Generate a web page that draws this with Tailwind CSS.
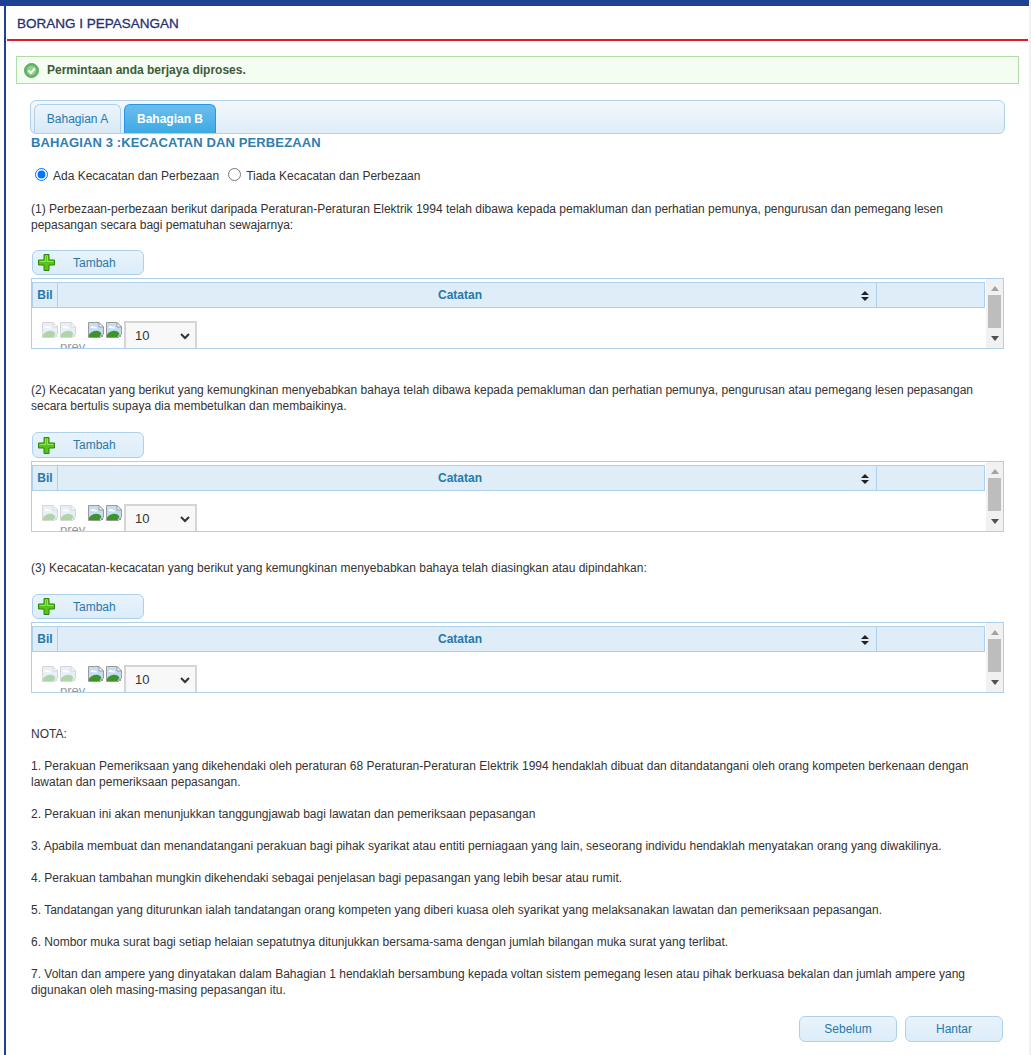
<!DOCTYPE html>
<html lang="en">
<head>
  <meta charset="UTF-8" />
  <title>Borang I Pepasangan</title>
  <script src="https://cdn.jsdelivr.net/npm/@tailwindcss/browser@4"></script>
</head>
<body class="bg-white h-[1055px] overflow-hidden border-r-2 border-[#f1f1f1] font-['Liberation_Sans',Arial,sans-serif] text-[12px] leading-[16px] text-[#333]">

  <svg width="0" height="0" class="absolute">
    <defs>
      <symbol id="broken" viewBox="0 0 16 16">
        <path d="M.5 .5h10.5l4.5 4.5v7l-3 3.500H.5z" fill="#c5dcf5" stroke="#9a9a9a" />
        <path d="M11 .5v4.500h4.500z" fill="#fff" stroke="#9a9a9a" />
        <path d="M2.500 6c0-2 3-2.500 4-1.200 1.500-.5 3 .5 2.500 1.700z" fill="#fff" />
        <path d="M1 15V12.500C4 9 8 8 11.500 9.500L13.500 11.500 11.500 15z" fill="#3f9427" />
        <path d="M13 13l2 2M15 13l-2 2" stroke="#9a9a9a" />
      </symbol>
      <symbol id="plus" viewBox="0 0 17 17">
        <path d="M6 .5h5v5.500h5.500v5H11v5.500H6V11H.5V6H6z" fill="#58c31a" stroke="#2c8508" />
        <path d="M7 1.500h3v5.500h5.500v1H9V2H8v6H1.500V7H7z" fill="#9be25c" />
      </symbol>
    </defs>
  </svg>

  <div class="h-[6px] bg-[#1f4192]"></div>

  <div class="ml-[4px] h-[1049px] border-l-2 border-[#1f4192] pl-px pr-px">
    <!-- Title -->
    <div class="h-[35px] border-b-2 border-[#e2192c] pl-[10px] pt-[9px]">
      <h1 class="text-[13.5px] leading-[18px] font-normal text-[#27306f] [-webkit-text-stroke:0.3px_#27306f]">BORANG I PEPASANGAN</h1>
    </div>

    <!-- Success message -->
    <div class="ml-[9px] mt-[15px] w-[1003px] h-[28px] border border-[#b0dfa5] bg-[#f4fdf1] flex items-center pl-[7px] gap-[8px]">
      <svg width="15" height="15" viewBox="0 0 15 15">
        <circle cx="7.5" cy="7.5" r="7" fill="#5cb85c" stroke="#6f9f6f" />
        <circle cx="7.5" cy="7.5" r="4.8" fill="#8fd18f" />
        <path d="M4.5 7.5 L6.8 10 L10.8 5.500" fill="none" stroke="#fff" stroke-width="2" />
      </svg>
      <span class="font-bold text-[#3f5a3a]">Permintaan anda berjaya diproses.</span>
    </div>

    <div class="pl-[24px] pr-[24px] mt-[16px]">
      <!-- Tabs -->
      <div class="-ml-px w-[975px] h-[34px] border border-[#aed0ea] rounded-[6px] bg-linear-to-b from-[#f3f8fc] to-[#deedf7] flex items-end pl-[3px] gap-[3px]">
        <button class="w-[87px] h-[29px] border border-b-0 border-[#aed0ea] rounded-t-[6px] bg-linear-to-b from-[#ecf4fb] to-[#d9e9f6] text-[#2779aa]">Bahagian A</button>
        <button class="w-[92px] h-[29px] border border-b-0 border-[#2694e8] rounded-t-[6px] bg-linear-to-b from-[#6bbdee] to-[#3baae3] text-white font-bold">Bahagian B</button>
      </div>

      <h2 class="h-[17px] text-[13px] tracking-[0.12px] leading-[17px] font-bold text-[#2e7eb0]">BAHAGIAN 3 :KECACATAN DAN PERBEZAAN</h2>

      <!-- Radios -->
      <div class="flex items-center mt-[14px] h-[18px] pl-[4px]">
        <input type="radio" name="kecacatan" checked class="w-[13px] h-[13px] accent-[#0075ff]" />
        <label class="ml-[5px] mt-[4px]">Ada Kecacatan dan Perbezaan</label>
        <input type="radio" name="kecacatan" class="w-[13px] h-[13px] ml-[9px]" />
        <label class="ml-[5px] mt-[4px]">Tiada Kecacatan dan Perbezaan</label>
      </div>

      <p class="mt-[18px] w-[960px]">(1) Perbezaan-perbezaan berikut daripada Peraturan-Peraturan Elektrik 1994 telah dibawa kepada pemakluman dan perhatian pemunya, pengurusan dan pemegang lesen pepasangan secara bagi pematuhan sewajarnya:</p>

      <!-- Table 1 -->
      <button class="mt-[17px] ml-px w-[112px] h-[25px] border border-[#aed0ea] rounded-[6px] bg-linear-to-b from-[#e8f3fc] to-[#dcedfa] flex items-center text-[#2779aa] pl-[5px]">
        <svg width="17" height="17"><use href="#plus" /></svg>
        <span class="ml-[18px]">Tambah</span>
      </button>
      <div class="mt-[3px] w-[973px] h-[71px] border border-[#aed0ea] flex overflow-hidden">
        <div class="w-[953px] pt-[3px]">
          <div class="h-[26px] flex border border-[#aed0ea] bg-[#deedf7] font-bold text-[#2779aa]">
            <div class="w-[25px] border-r border-[#aed0ea] flex items-center justify-center">Bil</div>
            <div class="w-[819px] border-r border-[#aed0ea] flex items-center justify-center pr-[14px] relative">Catatan
              <svg class="absolute right-[7px] top-[8px]" width="8" height="10" viewBox="0 0 8 10"><path d="M4 0L8 4H0zM4 10L0 6H8z" fill="#222" /></svg>
            </div>
          </div>
          <div class="flex pl-[10px] pt-[14px] h-[41px] relative">
            <svg class="opacity-40" width="16" height="16"><use href="#broken" /></svg>
            <svg class="opacity-40 ml-[2px]" width="16" height="16"><use href="#broken" /></svg>
            <span class="absolute left-[28px] top-[31px] text-[13px] text-[#999]">prev</span>
            <svg class="ml-[12px]" width="16" height="16"><use href="#broken" /></svg>
            <svg class="ml-[2px]" width="16" height="16"><use href="#broken" /></svg>
            <div class="ml-[2px] -mt-[1px] w-[73px] h-[29px] border-2 border-[#d5d5d5] bg-[#f8f8f8] flex items-center justify-between pl-[9px] pr-[2px] text-[13px]">
              <span>10</span>
              <svg width="16" height="16" viewBox="0 0 16 16"><path d="M4 6l4 4 4-4" fill="none" stroke="#333" stroke-width="2" /></svg>
            </div>
          </div>
        </div>
        <div class="w-[17px] ml-px bg-[#f1f1f1] flex flex-col items-center">
          <svg class="mt-[7px]" width="8" height="5" viewBox="0 0 8 5"><path d="M4 0l4 5H0z" fill="#a3a3a3" /></svg>
          <div class="mt-[4px] w-[13px] h-[33px] bg-[#bdbdbd]"></div>
          <svg class="mt-[8px]" width="8" height="5" viewBox="0 0 8 5"><path d="M4 5L0 0h8z" fill="#505050" /></svg>
        </div>
      </div>

      <p class="mt-[33px] w-[960px]">(2) Kecacatan yang berikut yang kemungkinan menyebabkan bahaya telah dibawa kepada pemakluman dan perhatian pemunya, pengurusan atau pemegang lesen pepasangan secara bertulis supaya dia membetulkan dan membaikinya.</p>

      <!-- Table 2 -->
      <button class="mt-[18px] ml-px w-[112px] h-[26px] border border-[#aed0ea] rounded-[6px] bg-linear-to-b from-[#e8f3fc] to-[#dcedfa] flex items-center text-[#2779aa] pl-[5px]">
        <svg width="17" height="17"><use href="#plus" /></svg>
        <span class="ml-[18px]">Tambah</span>
      </button>
      <div class="mt-[3px] w-[973px] h-[71px] border border-[#aed0ea] flex overflow-hidden">
        <div class="w-[953px] pt-[3px]">
          <div class="h-[26px] flex border border-[#aed0ea] bg-[#deedf7] font-bold text-[#2779aa]">
            <div class="w-[25px] border-r border-[#aed0ea] flex items-center justify-center">Bil</div>
            <div class="w-[819px] border-r border-[#aed0ea] flex items-center justify-center pr-[14px] relative">Catatan
              <svg class="absolute right-[7px] top-[8px]" width="8" height="10" viewBox="0 0 8 10"><path d="M4 0L8 4H0zM4 10L0 6H8z" fill="#222" /></svg>
            </div>
          </div>
          <div class="flex pl-[10px] pt-[14px] h-[41px] relative">
            <svg class="opacity-40" width="16" height="16"><use href="#broken" /></svg>
            <svg class="opacity-40 ml-[2px]" width="16" height="16"><use href="#broken" /></svg>
            <span class="absolute left-[28px] top-[31px] text-[13px] text-[#999]">prev</span>
            <svg class="ml-[12px]" width="16" height="16"><use href="#broken" /></svg>
            <svg class="ml-[2px]" width="16" height="16"><use href="#broken" /></svg>
            <div class="ml-[2px] -mt-[1px] w-[73px] h-[29px] border-2 border-[#d5d5d5] bg-[#f8f8f8] flex items-center justify-between pl-[9px] pr-[2px] text-[13px]">
              <span>10</span>
              <svg width="16" height="16" viewBox="0 0 16 16"><path d="M4 6l4 4 4-4" fill="none" stroke="#333" stroke-width="2" /></svg>
            </div>
          </div>
        </div>
        <div class="w-[17px] ml-px bg-[#f1f1f1] flex flex-col items-center">
          <svg class="mt-[7px]" width="8" height="5" viewBox="0 0 8 5"><path d="M4 0l4 5H0z" fill="#a3a3a3" /></svg>
          <div class="mt-[4px] w-[13px] h-[33px] bg-[#bdbdbd]"></div>
          <svg class="mt-[8px]" width="8" height="5" viewBox="0 0 8 5"><path d="M4 5L0 0h8z" fill="#505050" /></svg>
        </div>
      </div>

      <p class="mt-[28px] w-[960px]">(3) Kecacatan-kecacatan yang berikut yang kemungkinan menyebabkan bahaya telah diasingkan atau dipindahkan:</p>

      <!-- Table 3 -->
      <button class="mt-[18px] ml-px w-[112px] h-[25px] border border-[#aed0ea] rounded-[6px] bg-linear-to-b from-[#e8f3fc] to-[#dcedfa] flex items-center text-[#2779aa] pl-[5px]">
        <svg width="17" height="17"><use href="#plus" /></svg>
        <span class="ml-[18px]">Tambah</span>
      </button>
      <div class="mt-[3px] w-[973px] h-[71px] border border-[#aed0ea] flex overflow-hidden">
        <div class="w-[953px] pt-[3px]">
          <div class="h-[26px] flex border border-[#aed0ea] bg-[#deedf7] font-bold text-[#2779aa]">
            <div class="w-[25px] border-r border-[#aed0ea] flex items-center justify-center">Bil</div>
            <div class="w-[819px] border-r border-[#aed0ea] flex items-center justify-center pr-[14px] relative">Catatan
              <svg class="absolute right-[7px] top-[8px]" width="8" height="10" viewBox="0 0 8 10"><path d="M4 0L8 4H0zM4 10L0 6H8z" fill="#222" /></svg>
            </div>
          </div>
          <div class="flex pl-[10px] pt-[14px] h-[41px] relative">
            <svg class="opacity-40" width="16" height="16"><use href="#broken" /></svg>
            <svg class="opacity-40 ml-[2px]" width="16" height="16"><use href="#broken" /></svg>
            <span class="absolute left-[28px] top-[31px] text-[13px] text-[#999]">prev</span>
            <svg class="ml-[12px]" width="16" height="16"><use href="#broken" /></svg>
            <svg class="ml-[2px]" width="16" height="16"><use href="#broken" /></svg>
            <div class="ml-[2px] -mt-[1px] w-[73px] h-[29px] border-2 border-[#d5d5d5] bg-[#f8f8f8] flex items-center justify-between pl-[9px] pr-[2px] text-[13px]">
              <span>10</span>
              <svg width="16" height="16" viewBox="0 0 16 16"><path d="M4 6l4 4 4-4" fill="none" stroke="#333" stroke-width="2" /></svg>
            </div>
          </div>
        </div>
        <div class="w-[17px] ml-px bg-[#f1f1f1] flex flex-col items-center">
          <svg class="mt-[7px]" width="8" height="5" viewBox="0 0 8 5"><path d="M4 0l4 5H0z" fill="#a3a3a3" /></svg>
          <div class="mt-[4px] w-[13px] h-[33px] bg-[#bdbdbd]"></div>
          <svg class="mt-[8px]" width="8" height="5" viewBox="0 0 8 5"><path d="M4 5L0 0h8z" fill="#505050" /></svg>
        </div>
      </div>

      <!-- Notes -->
      <div class="mt-[33px] w-[960px] flex flex-col gap-[16px]">
        <p>NOTA:</p>
        <p>1. Perakuan Pemeriksaan yang dikehendaki oleh peraturan 68 Peraturan-Peraturan Elektrik 1994 hendaklah dibuat dan ditandatangani oleh orang kompeten berkenaan dengan lawatan dan pemeriksaan pepasangan.</p>
        <p>2. Perakuan ini akan menunjukkan tanggungjawab bagi lawatan dan pemeriksaan pepasangan</p>
        <p>3. Apabila membuat dan menandatangani perakuan bagi pihak syarikat atau entiti perniagaan yang lain, seseorang individu hendaklah menyatakan orang yang diwakilinya.</p>
        <p>4. Perakuan tambahan mungkin dikehendaki sebagai penjelasan bagi pepasangan yang lebih besar atau rumit.</p>
        <p>5. Tandatangan yang diturunkan ialah tandatangan orang kompeten yang diberi kuasa oleh syarikat yang melaksanakan lawatan dan pemeriksaan pepasangan.</p>
        <p>6. Nombor muka surat bagi setiap helaian sepatutnya ditunjukkan bersama-sama dengan jumlah bilangan muka surat yang terlibat.</p>
        <p>7. Voltan dan ampere yang dinyatakan dalam Bahagian 1 hendaklah bersambung kepada voltan sistem pemegang lesen atau pihak berkuasa bekalan dan jumlah ampere yang digunakan oleh masing-masing pepasangan itu.</p>
      </div>

      <!-- Actions -->
      <div class="mt-[18px] w-[972px] flex justify-end gap-[8px]">
        <button class="w-[98px] h-[26px] border border-[#aed0ea] rounded-[6px] bg-linear-to-b from-[#e8f3fc] to-[#dcedfa] text-[#2779aa]">Sebelum</button>
        <button class="w-[98px] h-[26px] border border-[#aed0ea] rounded-[6px] bg-linear-to-b from-[#e8f3fc] to-[#dcedfa] text-[#2779aa]">Hantar</button>
      </div>
    </div>
  </div>
</body>
</html>
